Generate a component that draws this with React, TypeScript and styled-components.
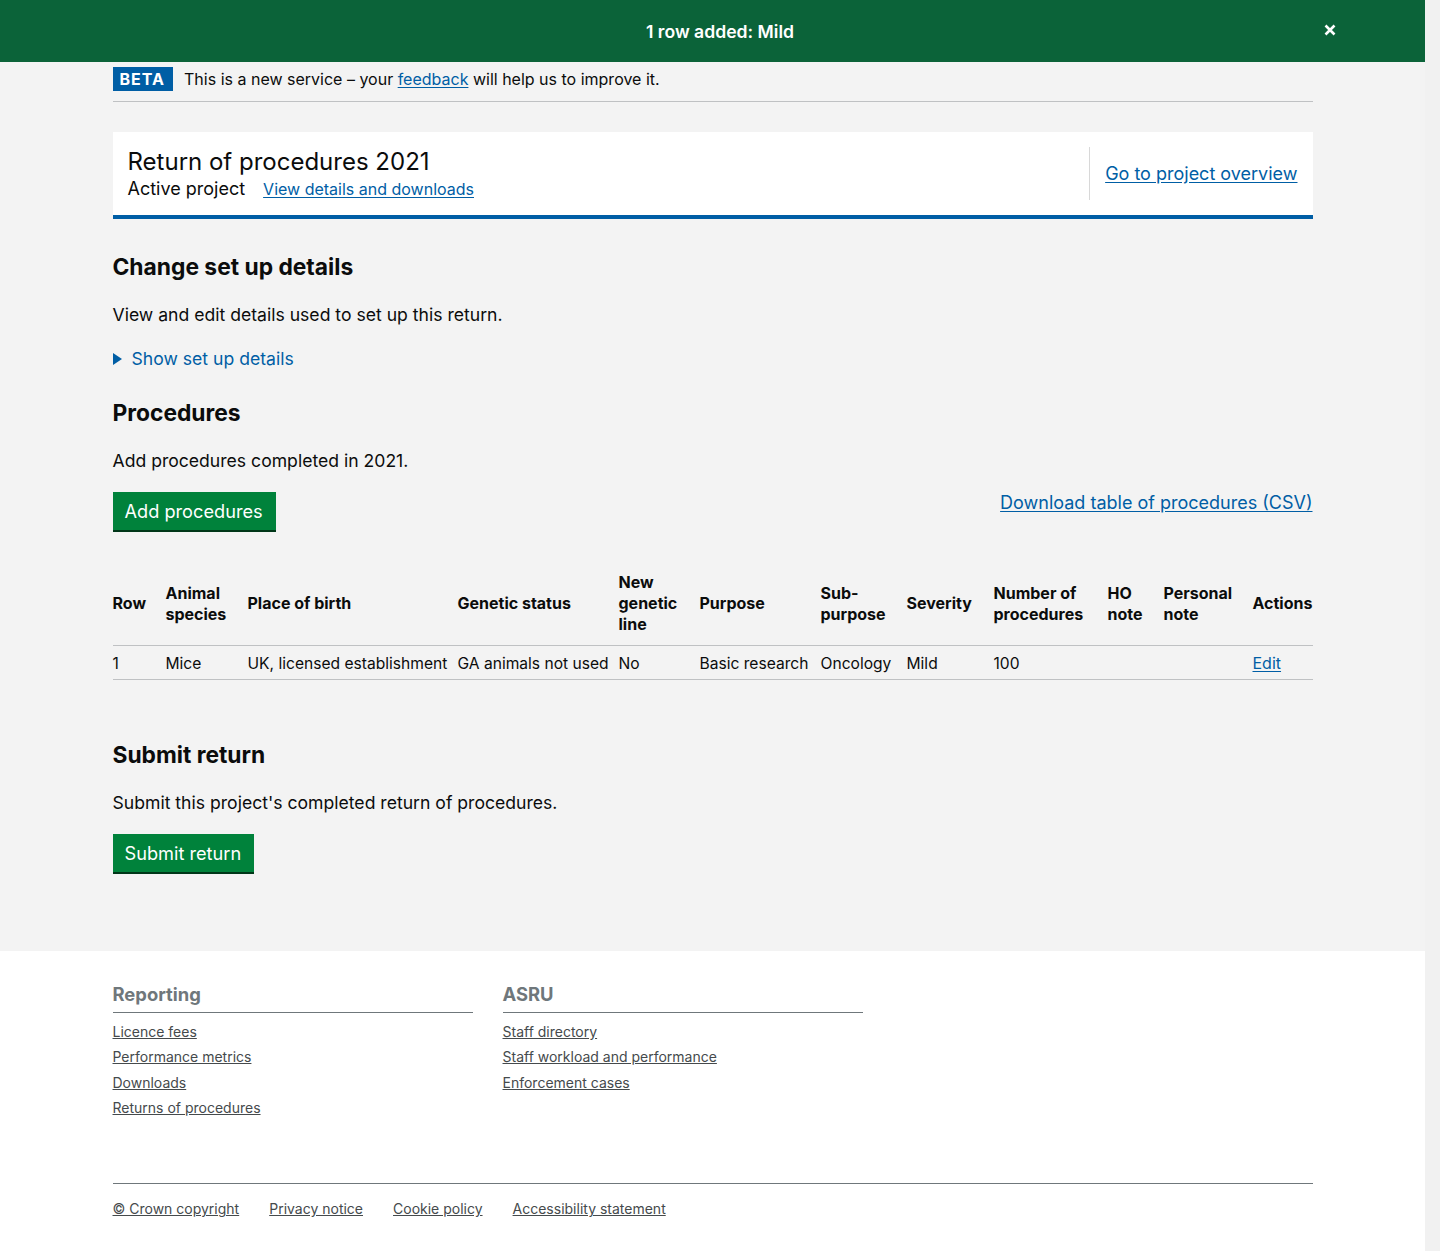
import styled, { createGlobalStyle } from 'styled-components';

const GlobalStyle = createGlobalStyle`
    html {
        background:#f1f1f1;
    }
    body {
        margin:0 15px 0 0;
        padding:0;
        background:#fff;
        font-family: Inter, "Noto Sans", Arial, sans-serif;
        color:#0b0c0c;
    }
`;

const columns = [
    { title: 'Row', width: 53 },
    { title: 'Animal species', width: 82 },
    { title: 'Place of birth', width: 210 },
    { title: 'Genetic status', width: 161 },
    { title: 'New genetic line', width: 81 },
    { title: 'Purpose', width: 121 },
    { title: 'Sub- purpose', width: 86 },
    { title: 'Severity', width: 87 },
    { title: 'Number of procedures', width: 114 },
    { title: 'HO note', width: 56 },
    { title: 'Personal note', width: 89 },
    { title: 'Actions', width: 60 },
];

const rows = [
    ['1', 'Mice', 'UK, licensed establishment', 'GA animals not used', 'No', 'Basic research', 'Oncology', 'Mild', '100', '', ''],
];

function App() {
    return (
        <>
            <GlobalStyle />
            <Notice>
                <NoticeText>1 row added: Mild</NoticeText>
                <CloseButton aria-label="close">
                    <svg width="12" height="12" viewBox="0 0 12 12">
                        <path d="M1.5 1.5 L10.5 10.5 M10.5 1.5 L1.5 10.5" stroke="#fff" strokeWidth="2.6" />
                    </svg>
                </CloseButton>
            </Notice>
            <Main>
                <Wrapper>
                    <PhaseBanner>
                        <PhaseTag>BETA</PhaseTag>
                        <span>This is a new service – your <Link href="#">feedback</Link> will help us to improve it.</span>
                    </PhaseBanner>

                    <HeaderCard>
                        <HeaderMain>
                            <Title>Return of procedures 2021</Title>
                            <Subtitle>
                                Active project
                                <SmallLink href="#">View details and downloads</SmallLink>
                            </Subtitle>
                        </HeaderMain>
                        <HeaderAside>
                            <Link href="#">Go to project overview</Link>
                        </HeaderAside>
                    </HeaderCard>

                    <Heading $top={33}>Change set up details</Heading>
                    <Body>View and edit details used to set up this return.</Body>
                    <Summary>
                        <Triangle />
                        Show set up details
                    </Summary>

                    <Heading $top={27}>Procedures</Heading>
                    <Body>Add procedures completed in 2021.</Body>
                    <ActionRow>
                        <Button>Add procedures</Button>
                        <Link href="#">Download table of procedures (CSV)</Link>
                    </ActionRow>

                    <Table>
                        <colgroup>
                            {columns.map(c => <col key={c.title} style={{ width: c.width }} />)}
                        </colgroup>
                        <thead>
                            <tr>
                                {columns.map(c => <Th key={c.title}>{c.title}</Th>)}
                            </tr>
                        </thead>
                        <tbody>
                            {rows.map((r, i) => (
                                <tr key={i}>
                                    {r.map((cell, j) => <Td key={j}>{cell}</Td>)}
                                    <Td><TableLink href="#">Edit</TableLink></Td>
                                </tr>
                            ))}
                        </tbody>
                    </Table>

                    <Heading $top={60}>Submit return</Heading>
                    <Body>Submit this project's completed return of procedures.</Body>
                    <Button>Submit return</Button>
                </Wrapper>
            </Main>
            <Footer>
                <Wrapper>
                    <FooterColumns>
                        <FooterColumn>
                            <FooterHeading>Reporting</FooterHeading>
                            <FooterList>
                                <FooterLink href="#">Licence fees</FooterLink>
                                <FooterLink href="#">Performance metrics</FooterLink>
                                <FooterLink href="#">Downloads</FooterLink>
                                <FooterLink href="#">Returns of procedures</FooterLink>
                            </FooterList>
                        </FooterColumn>
                        <FooterColumn>
                            <FooterHeading>ASRU</FooterHeading>
                            <FooterList>
                                <FooterLink href="#">Staff directory</FooterLink>
                                <FooterLink href="#">Staff workload and performance</FooterLink>
                                <FooterLink href="#">Enforcement cases</FooterLink>
                            </FooterList>
                        </FooterColumn>
                    </FooterColumns>
                    <FooterMeta>
                        <FooterLink href="#">© Crown copyright</FooterLink>
                        <FooterLink href="#">Privacy notice</FooterLink>
                        <FooterLink href="#">Cookie policy</FooterLink>
                        <FooterLink href="#">Accessibility statement</FooterLink>
                    </FooterMeta>
                </Wrapper>
            </Footer>
        </>
    )
}
export default App;

const Notice = styled.div`
    height:62px;
    background:#0b6339;
    display:flex;
    align-items:center;
    justify-content:center;
    padding-left:15px;
    position:relative;
`;
const NoticeText = styled.div`
    color:#fff;
    font-size:17.6px;
    font-weight:600;
`;
const CloseButton = styled.button`
    position:absolute;
    right:89px;
    top:24px;
    border:0;
    background:none;
    padding:0;
    cursor:pointer;
    display:flex;
`;
const Main = styled.div`
    background:#f3f3f3;
    padding-bottom:79px;
`;
const Wrapper = styled.div`
    width:1200px;
    margin:0 auto;
`;
const PhaseBanner = styled.div`
    display:flex;
    align-items:center;
    gap:11px;
    padding:5px 0 10px;
    border-bottom:1px solid #bfc1c3;
    font-size:16px;
`;
const PhaseTag = styled.strong`
    background:#005ea5;
    color:#fff;
    font-size:16px;
    font-weight:700;
    letter-spacing:1px;
    padding:2px 8px 2px 7px;
    line-height:20px;
`;
const Link = styled.a`
    color:#005ea5;
    font-size:inherit;
    text-decoration:underline;
    text-underline-offset:2px;
`;
const SmallLink = styled(Link)`
    font-size:16px;
    margin-left:18px;
`;
const HeaderCard = styled.div`
    margin-top:30px;
    background:#fff;
    border-bottom:4px solid #005ea5;
    display:flex;
    align-items:center;
    padding:15px;
`;
const HeaderMain = styled.div`
    flex:1;
`;
const Title = styled.h1`
    margin:0;
    font-size:24px;
    font-weight:400;
    line-height:28px;
`;
const Subtitle = styled.div`
    font-size:18px;
    margin-top:2px;
`;
const HeaderAside = styled.div`
    border-left:1px solid #d8d8d8;
    padding:16px 0 16px 15px;
    font-size:18px;
`;
const Heading = styled.h2<{ $top: number }>`
    margin:${p => p.$top}px 0 0;
    font-size:22.8px;
    font-weight:700;
    line-height:30px;
`;
const Body = styled.p`
    margin:21px 0 0;
    font-size:17.6px;
    line-height:24px;
`;
const Summary = styled.div`
    margin-top:20px;
    display:flex;
    align-items:center;
    gap:10px;
    color:#005ea5;
    font-size:17.6px;
    line-height:24px;
`;
const Triangle = styled.span`
    width:0;
    height:0;
    border-top:6px solid transparent;
    border-bottom:6px solid transparent;
    border-left:9px solid #005ea5;
`;
const ActionRow = styled.div`
    margin-top:19px;
    display:flex;
    justify-content:space-between;
    align-items:flex-start;
    font-size:18px;
`;
const Button = styled.button`
    margin-top:19px;
    background:#00823b;
    color:#fff;
    border:0;
    box-shadow:0 2px 0 #003618;
    font-family:inherit;
    font-size:18.2px;
    line-height:24px;
    padding:7px 13px 7px 12px;
    cursor:pointer;
    ${ActionRow} & { margin-top:0; }
`;
const Table = styled.table`
    margin-top:32px;
    width:100%;
    table-layout:fixed;
    border-collapse:collapse;
    font-size:16px;
`;
const Th = styled.th`
    text-align:left;
    font-weight:700;
    line-height:21px;
    padding:10px 10px 10px 0;
    border-bottom:1px solid #bfc1c3;
    vertical-align:middle;
`;
const Td = styled.td`
    line-height:20px;
    padding:7px 4px 5px 0;
    border-bottom:1px solid #bfc1c3;
    white-space:nowrap;
    font-size:15.6px;
`;
const TableLink = styled(Link)`
    font-size:16px;
`;
const Footer = styled.footer`
    background:#fff;
    padding:31px 0 56px;
`;
const FooterColumns = styled.div`
    display:flex;
    gap:30px;
`;
const FooterColumn = styled.div`
    width:360px;
`;
const FooterHeading = styled.h3`
    margin:0;
    font-size:18.4px;
    font-weight:700;
    color:#6f777b;
    line-height:25px;
    padding-bottom:5px;
    border-bottom:1px solid #6f777b;
`;
const FooterList = styled.div`
    display:flex;
    flex-direction:column;
    align-items:flex-start;
    gap:7.4px;
    margin-top:10px;
`;
const FooterLink = styled.a`
    color:#454a4c;
    font-size:14px;
    line-height:18px;
    text-decoration:underline;
`;
const FooterMeta = styled.div`
    margin-top:66px;
    border-top:1px solid #6f777b;
    padding-top:16px;
    display:flex;
    gap:30px;
`;
